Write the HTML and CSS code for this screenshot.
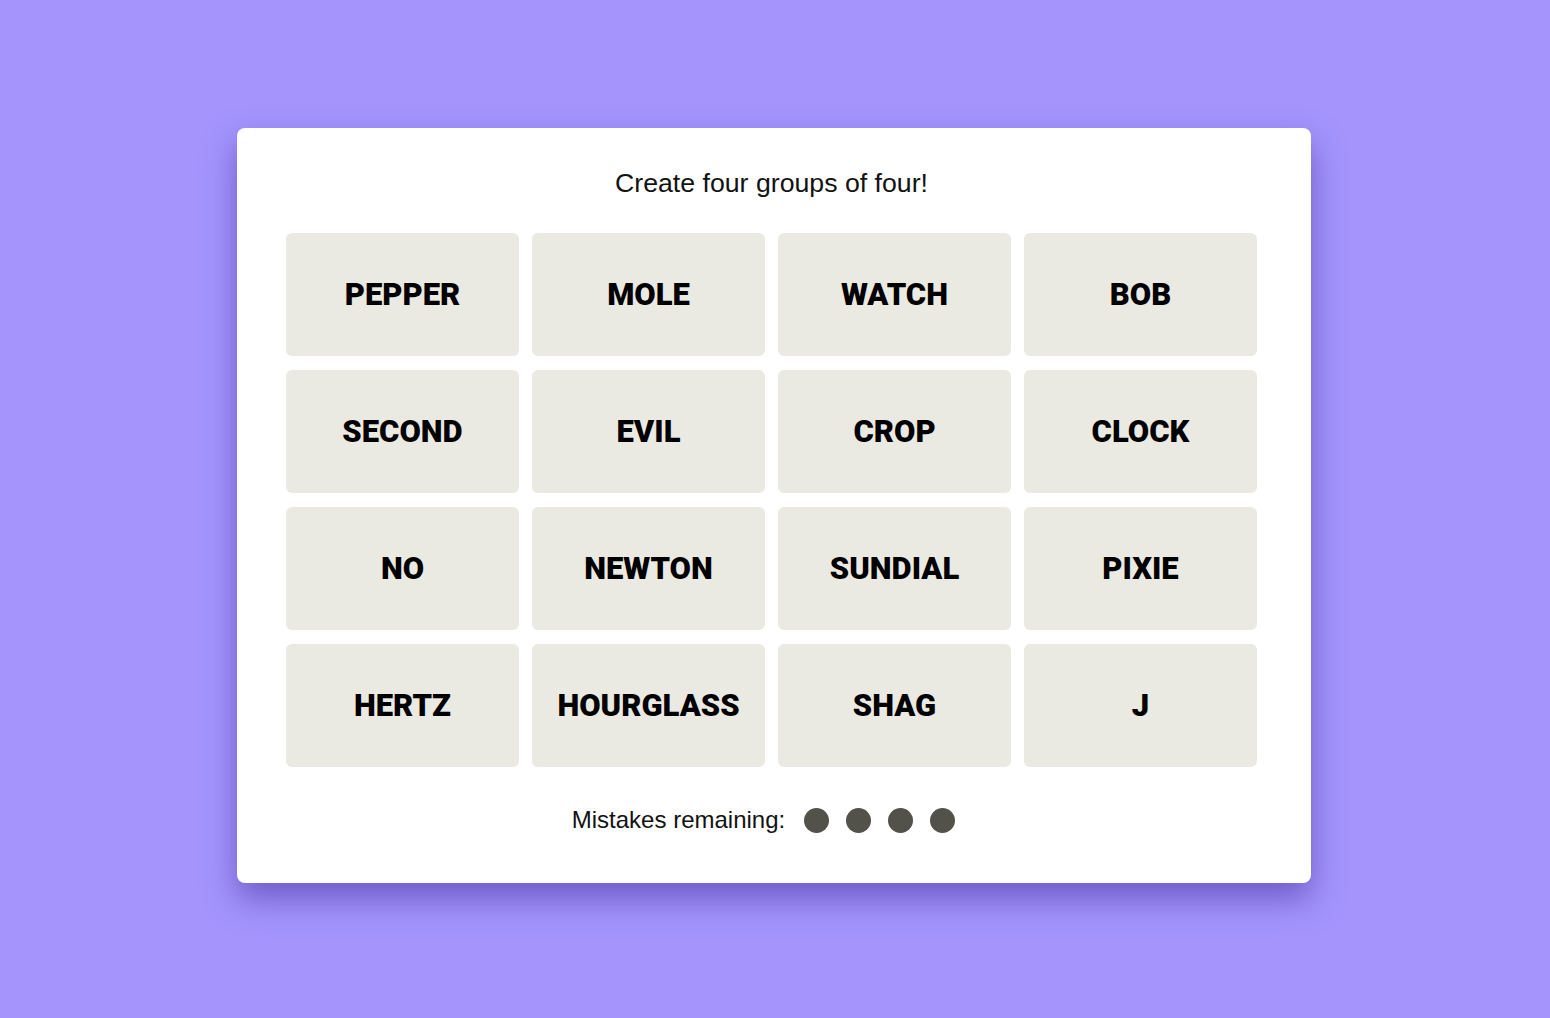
FILE: index.html
```html
<!DOCTYPE html>
<html lang="en">
<head>
    <meta charset="UTF-8">
    <meta name="viewport" content="width=device-width, initial-scale=1.0">
    <title>Connections</title>
    <link rel="stylesheet" href="styles.css">
</head>
<body>

<div class="board">
    <p class="prompt">Create four groups of four!</p>

    <div class="tiles">
        <div class="tile">PEPPER</div>
        <div class="tile">MOLE</div>
        <div class="tile">WATCH</div>
        <div class="tile">BOB</div>
        <div class="tile">SECOND</div>
        <div class="tile">EVIL</div>
        <div class="tile">CROP</div>
        <div class="tile">CLOCK</div>
        <div class="tile">NO</div>
        <div class="tile">NEWTON</div>
        <div class="tile">SUNDIAL</div>
        <div class="tile">PIXIE</div>
        <div class="tile">HERTZ</div>
        <div class="tile">HOURGLASS</div>
        <div class="tile">SHAG</div>
        <div class="tile">J</div>
    </div>

    <div class="mistakes">
        <span>Mistakes remaining:</span>
        <div class="dots">
            <span class="dot"></span>
            <span class="dot"></span>
            <span class="dot"></span>
            <span class="dot"></span>
        </div>
    </div>
</div>

</body>
</html>
```

FILE: styles.css
```css
body {
    margin: 0;
    min-height: 1018px;
    background-color: #a494fc;
    font-family: "Liberation Sans", Arial, sans-serif;
    color: #121212;
    display: flex;
    justify-content: center;
    align-items: flex-start;
}
.board {
    width: 1074px;
    box-sizing: border-box;
    margin: 128px 2px 0 0;
    padding: 40px 54px 50px 49px;
    background-color: #fff;
    border-radius: 8px;
    box-shadow: 0 16px 32px rgba(60, 40, 150, 0.5);
}
.prompt {
    margin: 0 0 35px;
    font-size: 26.7px;
    line-height: 30px;
    text-align: center;
}
.tiles {
    display: grid;
    grid-template-columns: repeat(4, 233px);
    grid-auto-rows: 123px;
    column-gap: 13px;
    row-gap: 14px;
}
.tile {
    display: flex;
    align-items: center;
    justify-content: center;
    background-color: #eae9e2;
    border-radius: 6px;
    font-family: Roboto, "Liberation Sans", sans-serif;
    font-weight: 900;
    font-size: 31px;
    color: #000;
}
.mistakes {
    display: flex;
    align-items: center;
    justify-content: center;
    gap: 19px;
    margin: 40px 16px 0 0;
    font-size: 24px;
    line-height: 26px;
}
.dots {
    display: flex;
    gap: 17px;
}
.dot {
    width: 25px;
    height: 25px;
    border-radius: 50%;
    background-color: #52524a;
}
```
